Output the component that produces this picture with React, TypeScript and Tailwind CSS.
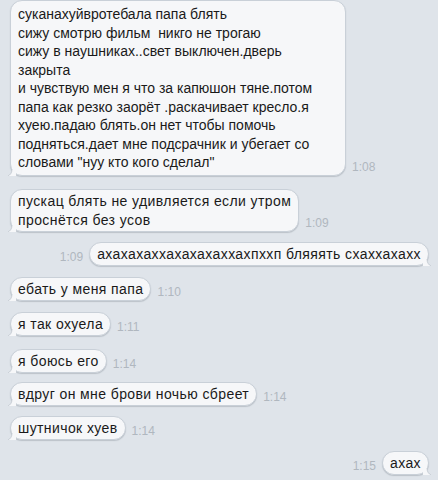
import React from "react";

type Msg = {
  lines: string[];
  time: string;
  out?: boolean;
  mt: string;
};

const msgs: Msg[] = [
  {
    lines: [
      "суканахуйвротебала папа блять",
      "сижу смотрю фильм  никго не трогаю",
      "сижу в наушниках..свет выключен.дверь",
      "закрыта",
      "и чувствую мен я что за капюшон тяне.потом",
      "папа как резко заорёт .раскачивает кресло.я",
      "хуею.падаю блять.он нет чтобы помочь",
      "подняться.дает мне подсрачник и убегает со",
      'словами "нуу кто кого сделал"',
    ],
    time: "1:08",
    mt: "mt-[0px]",
  },
  {
    lines: ["пускац блять не удивляется если утром", "проснётся без усов"],
    time: "1:09",
    mt: "mt-[13px]",
  },
  { lines: ["ахахахаххахахахаххахпххп бляяять схаххахахх"], time: "1:09", out: true, mt: "mt-[10px]" },
  { lines: ["ебать у меня папа"], time: "1:10", mt: "mt-[11px]" },
  { lines: ["я так охуела"], time: "1:11", mt: "mt-[11px]" },
  { lines: ["я боюсь его"], time: "1:14", mt: "mt-[13px]" },
  { lines: ["вдруг он мне брови ночью сбреет"], time: "1:14", mt: "mt-[9px]" },
  { lines: ["шутничок хуев"], time: "1:14", mt: "mt-[10px]" },
  { lines: ["ахах"], time: "1:15", out: true, mt: "mt-[11px]" },
];

function Tail({ out }: { out?: boolean }) {
  return (
    <svg
      width="9"
      height="9"
      viewBox="0 0 9 9"
      className={
        out
          ? "absolute -right-[4px] bottom-[-1px] -scale-x-100"
          : "absolute -left-[4px] bottom-[-1px]"
      }
    >
      <path d="M9 0 L9 9 L1 9 C3 8 5 6 5 2 Z" fill="#f6f7f9" />
      <path d="M1 9 C3 8 5 6 5 2" stroke="#bfc6ce" strokeWidth="0.8" fill="none" />
    </svg>
  );
}

function Bubble({ m, first }: { m: Msg; first?: boolean }) {
  const multi = m.lines.length > 1;
  const bubble = (
    <div
      className={
        "relative rounded-[12px] bg-[#f6f7f9] border border-[#c9d0d8] shadow-[0_1px_1px_rgba(80,90,105,0.25)] px-[7px] text-[14px] text-[#1a1a1a] " +
        (first
          ? "w-[336px] leading-[18.5px] pt-[4px] pb-[3px]"
          : multi
          ? "tracking-[0.4px] leading-[19px] pt-[2px] pb-[1px]"
          : "tracking-[0.4px] leading-[18px] py-[2px]")
      }
    >
      {m.lines.map((l, i) => (
        <div key={i} className="whitespace-pre">
          {l}
        </div>
      ))}
      <Tail out={m.out} />
    </div>
  );
  const time = (
    <span className="text-[12px] leading-[12px] text-[#b0b7bf] mb-[3px] px-[6px]">{m.time}</span>
  );
  return (
    <div className={"flex items-end " + m.mt + (m.out ? " justify-end pr-[9px]" : " pl-[10px]")}>
      {m.out ? (
        <>
          {time}
          {bubble}
        </>
      ) : (
        <>
          {bubble}
          {time}
        </>
      )}
    </div>
  );
}

export default function App() {
  return (
    <div
      className="w-[438px] h-[480px] overflow-hidden bg-[#dfe4ea] flex flex-col"
      style={{ fontFamily: '"Liberation Sans", Arial, sans-serif' }}
    >
      {msgs.map((m, i) => (
        <Bubble key={i} m={m} first={i === 0} />
      ))}
    </div>
  );
}
